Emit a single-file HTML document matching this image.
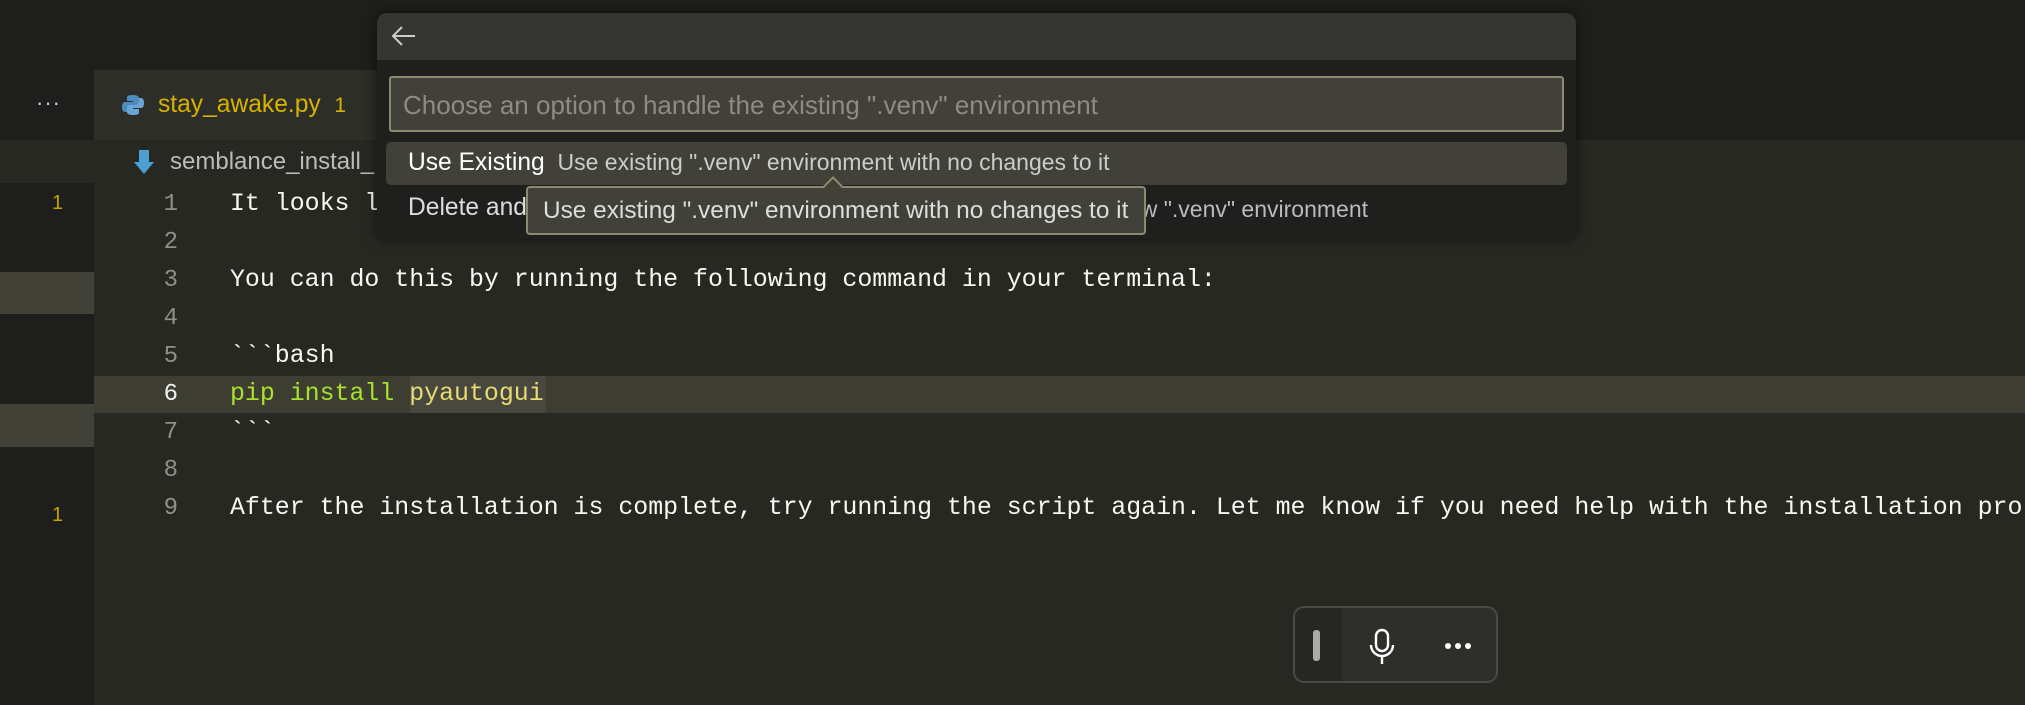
<!DOCTYPE html>
<html><head><meta charset="utf-8"><style>
*{margin:0;padding:0;box-sizing:border-box}
body{width:2025px;height:705px;overflow:hidden;background:#272822;position:relative;font-family:"Liberation Sans",sans-serif}
.abs{position:absolute}
.mono{font-family:"Liberation Mono",monospace;font-size:24.9px;white-space:pre;color:#f8f8f2}
.ln{position:absolute;left:120px;width:58px;text-align:right;font-family:"Liberation Mono",monospace;font-size:24px;color:#90908a}
</style></head><body>
<div class="abs" style="left:0;top:0;width:2025px;height:70px;background:#1e1f1c"></div>
<div class="abs" style="left:0;top:70px;width:2025px;height:70px;background:#1e1f1c"></div>
<div class="abs" style="left:94px;top:70px;width:300px;height:70px;background:#2e2e28"></div>
<div class="abs" style="left:0;top:70px;width:94px;height:635px;background:#1e1f1c"></div>
<div class="abs" style="left:0;top:140px;width:94px;height:43px;background:#272822"></div>
<div class="abs" style="left:0;top:272px;width:94px;height:42px;background:#414138"></div>
<div class="abs" style="left:0;top:404px;width:94px;height:43px;background:#414138"></div>
<div class="abs" style="left:36px;top:90px;color:#ccc;font-size:22px;letter-spacing:1px">···</div>
<div class="abs" style="left:52px;top:192px;color:#c5a000;font-size:20px">1</div>
<div class="abs" style="left:52px;top:504px;color:#c5a000;font-size:20px">1</div>
<svg class="abs" style="left:122px;top:94px" width="22" height="22" viewBox="0 0 22 22"><path d="M10 1c-5 0-5 2-5 3v3h6v1H3c-2 0-3 2-3 5s1 5 3 5h2v-3c0-2 2-4 4-4h5c2 0 3-1 3-3V4c0-2-2-3-7-3z" fill="#4b8bbe"/><path d="M12 21c5 0 5-2 5-3v-3h-6v-1h8c2 0 3-2 3-5s-1-5-3-5h-2v3c0 2-2 4-4 4H8c-2 0-3 1-3 3v4c0 2 2 3 7 3z" fill="#6aa5d8"/></svg>
<div class="abs" style="left:158px;top:91px;color:#d7b300;font-size:24.6px">stay_awake.py&nbsp; <span style="font-size:21px">1</span></div>
<svg class="abs" style="left:134px;top:150px" width="20" height="24" viewBox="0 0 20 24"><path d="M5 0h10v12h5L10 24 0 12h5z" fill="#4d9ed3"/></svg>
<div class="abs" style="left:170px;top:148px;color:#bbb;font-size:24px">semblance_install_</div>
<div class="abs" style="left:94px;top:376px;width:1931px;height:37px;background:#3e3d32"></div>
<div class="abs" style="left:410px;top:376px;width:136px;height:37px;background:#49483e"></div>
<div class="ln" style="top:191px">1</div>
<div class="ln" style="top:229px">2</div>
<div class="ln" style="top:267px">3</div>
<div class="ln" style="top:305px">4</div>
<div class="ln" style="top:343px">5</div>
<div class="ln" style="top:381px;color:#f2f2f2">6</div>
<div class="ln" style="top:419px">7</div>
<div class="ln" style="top:457px">8</div>
<div class="ln" style="top:495px">9</div>
<div class="abs mono" style="left:230px;top:190px">It looks l                                                                      stall it.</div>
<div class="abs mono" style="left:230px;top:266px">You can do this by running the following command in your terminal:</div>
<div class="abs mono" style="left:230px;top:342px">&#96;&#96;&#96;bash</div>
<div class="abs mono" style="left:230px;top:380px"><span style="color:#a6e22e">pip install</span> <span style="color:#e6db74">pyautogui</span></div>
<div class="abs mono" style="left:230px;top:418px">&#96;&#96;&#96;</div>
<div class="abs mono" style="left:230px;top:494px">After the installation is complete, try running the script again. Let me know if you need help with the installation pro</div>
<div class="abs" style="left:377px;top:13px;width:1199px;height:226px;background:#1f1f1d;border-radius:10px;box-shadow:0 0 12px rgba(0,0,0,.6);overflow:hidden">
 <div style="height:47px;background:#353532"></div>
 <svg class="abs" style="left:14px;top:12px" width="26" height="22" viewBox="0 0 26 22"><path d="M24 11H2M11 2L2 11l9 9" stroke="#ccc" stroke-width="2" fill="none"/></svg>
 <div class="abs" style="left:12px;top:63px;width:1175px;height:56px;background:#414139;border:2px solid #8c8a70;border-radius:3px"></div>
 <div class="abs" style="left:26px;top:77px;color:#8c8c84;font-size:26px">Choose an option to handle the existing ".venv" environment</div>
 <div class="abs" style="left:9px;top:129px;width:1181px;height:43px;background:#414139;border-radius:5px"></div>
 <div class="abs" style="left:31px;top:136px;color:#fff;font-size:24.6px;white-space:nowrap">Use Existing <span style="color:#ccc;font-size:23px;margin-left:6px">Use existing ".venv" environment with no changes to it</span></div>
 <div class="abs" style="left:31px;top:181px;color:#ddd;font-size:24.6px">Delete and Recreate</div>
 <div class="abs" style="right:208px;top:183px;color:#bbb;font-size:23px;white-space:nowrap">Delete and recreate new ".venv" environment</div>
</div>
<div class="abs" style="left:526px;top:186px;width:620px;height:49px;background:#414139;border:2px solid #8c8a70;border-radius:4px"></div>
<div class="abs" style="left:826px;top:179px;width:14px;height:14px;background:#414139;border-left:2px solid #8c8a70;border-top:2px solid #8c8a70;transform:rotate(45deg)"></div>
<div class="abs" style="left:543px;top:197px;color:#ddd;font-size:24.4px;white-space:nowrap">Use existing ".venv" environment with no changes to it</div>
<div class="abs" style="left:1293px;top:606px;width:205px;height:77px;background:#2e2e2b;border:2px solid #4a4a45;border-radius:11px;overflow:hidden">
 <div style="position:absolute;left:0;top:0;width:47px;height:77px;background:#262623"></div>
 <div style="position:absolute;left:18px;top:22px;width:7px;height:31px;background:#aaa;border-radius:3px"></div>
 <svg style="position:absolute;left:73px;top:20px" width="28" height="38" viewBox="0 0 28 38"><rect x="8" y="2" width="12" height="21" rx="6" stroke="#fff" stroke-width="2.4" fill="none"/><path d="M3 17a11 11 0 0 0 22 0M14 28v8" stroke="#fff" stroke-width="2.4" fill="none"/></svg>
 <div style="position:absolute;left:150px;top:35px;width:6px;height:6px;border-radius:3px;background:#fff;box-shadow:10px 0 #fff,20px 0 #fff"></div>
</div>
</body></html>
